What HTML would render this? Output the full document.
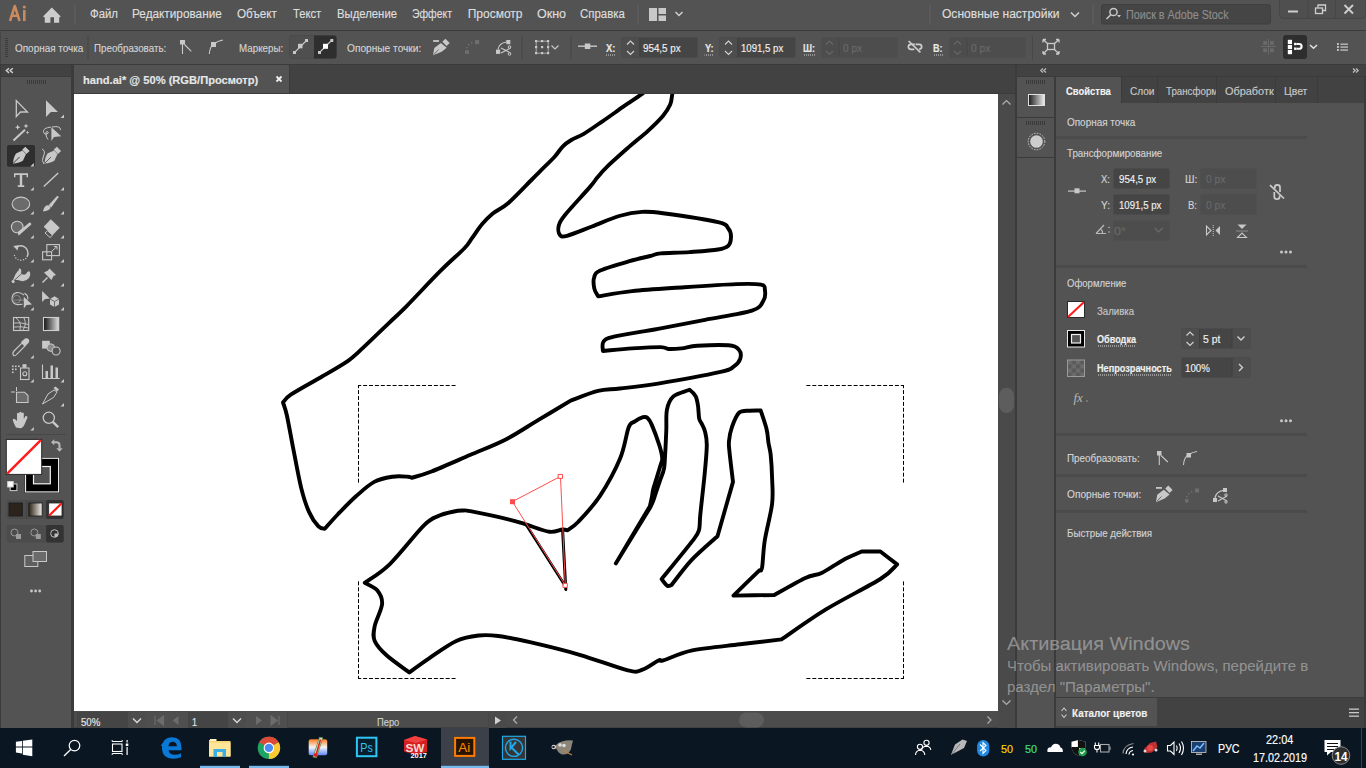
<!DOCTYPE html>
<html><head><meta charset="utf-8">
<style>
*{margin:0;padding:0;box-sizing:border-box}
html,body{width:1366px;height:768px;overflow:hidden;background:#535353;font-family:"Liberation Sans",sans-serif;color:#d9d9d9}
.a{position:absolute}
.t{position:absolute;white-space:nowrap;line-height:1;transform-origin:0 0;-webkit-text-stroke:0.15px currentColor}
svg{position:absolute;overflow:visible}
</style></head><body>
<!-- menubar -->
<div class="a" style="left:0;top:0;width:1366px;height:30px;background:#535353"></div>
<!-- control bar -->
<div class="a" style="left:0;top:30px;width:1366px;height:34px;background:#535353;border-top:1px solid #3b3b3b;border-left:1px solid #474747"></div>
<!-- left panel -->
<div class="a" style="left:0;top:64px;width:73px;height:664px;background:#3b3b3b"></div>
<div class="a" style="left:1px;top:65px;width:70px;height:11px;background:#424242"></div>
<div class="a" style="left:1px;top:77px;width:70px;height:651px;background:#535353"></div>
<!-- doc area -->
<div class="a" style="left:73px;top:64px;width:943px;height:664px;background:#3b3b3b"></div>
<div class="a" style="left:74px;top:65px;width:941px;height:28px;background:#424242"></div>
<div class="a" style="left:74px;top:65px;width:215px;height:28px;background:#535353"></div>
<div class="a" style="left:74px;top:94px;width:924px;height:617px;background:#fff"></div>
<div class="a" style="left:998px;top:94px;width:17px;height:617px;background:#4a4a4a"></div>
<div class="a" style="left:74px;top:711px;width:941px;height:17px;background:#4c4c4c;border-bottom:1px solid #42403d"></div>
<!-- right dock -->
<div class="a" style="left:1015px;top:64px;width:351px;height:664px;background:#3b3b3b"></div>
<div class="a" style="left:1017px;top:65px;width:349px;height:11px;background:#424242"></div>
<div class="a" style="left:1017px;top:77px;width:37px;height:651px;background:#535353"></div>
<div class="a" style="left:1056px;top:77px;width:308px;height:620px;background:#535353"></div>
<div class="a" style="left:1056px;top:77px;width:308px;height:26px;background:#424242"></div>
<div class="a" style="left:1056px;top:77px;width:65px;height:26px;background:#535353"></div>
<div class="a" style="left:1056px;top:698px;width:308px;height:30px;background:#424242"></div>
<div class="a" style="left:1056px;top:698px;width:101px;height:28px;background:#535353"></div>
<!-- taskbar -->
<div class="a" style="left:0;top:728px;width:1366px;height:40px;background:#0b1623"></div>

<svg style="left:0;top:0" width="1366" height="768">
<!-- menubar: Ai logo -->
<path d="M10,21 L14.8,6 L19.6,21 M12.2,15.8 H17.4" stroke="#c98a5e" stroke-width="2.5" fill="none" stroke-linejoin="round"/><rect x="23" y="10" width="2.6" height="11" fill="#c98a5e"/><circle cx="24.3" cy="7" r="1.6" fill="#c98a5e"/>
<!-- home icon -->
<path d="M43,16.5 L51.8,7.5 L60.8,16.5 L59.2,17.5 L59.2,22.8 L54,22.8 L54,17.3 L50.4,17.3 L50.4,22.8 L44.8,22.8 L44.8,17.5 Z" fill="#cdcdcd"/>
<rect x="74" y="5" width="2" height="20" fill="#5a5a5a"/>
<rect x="637" y="5" width="2" height="20" fill="#5a5a5a"/>
<!-- workspace icon -->
<rect x="649" y="8" width="8" height="13" fill="#c8c8c8"/>
<rect x="658.5" y="8" width="7.5" height="6" fill="#c8c8c8"/>
<rect x="658.5" y="15.5" width="7.5" height="5.5" fill="#c8c8c8"/>
<path d="M675.5,12 L679,15.5 L682.5,12" stroke="#d0d0d0" stroke-width="1.5" fill="none"/>
<rect x="929" y="5" width="2" height="20" fill="#5a5a5a"/>
<path d="M1071,12.5 L1075,16.5 L1079,12.5" stroke="#d0d0d0" stroke-width="1.5" fill="none"/>
<rect x="1092" y="5" width="2" height="20" fill="#5a5a5a"/>
<!-- search box -->
<rect x="1101.5" y="4.5" width="169" height="19.5" rx="2" fill="#454545" stroke="#3f3f3f"/>
<circle cx="1113.5" cy="12" r="3.6" stroke="#c8c8c8" stroke-width="1.5" fill="none"/>
<path d="M1111,14.5 L1106.5,19" stroke="#c8c8c8" stroke-width="1.6"/>
<path d="M1117,15 L1121,15 L1119,17.5 Z" fill="#c8c8c8"/>
<!-- window controls -->
<path d="M1279.5,0 V14.5 Q1279.5,18.5 1283.5,18.5 H1362 Q1366,18.5 1366,14.5 V0" fill="#4f4f4f" stroke="#464646"/>
<rect x="1307.5" y="0" width="1" height="18" fill="#464646"/>
<rect x="1335" y="0" width="1" height="18" fill="#464646"/>
<rect x="1288" y="10.5" width="10" height="2" fill="#cfcfcf"/>
<rect x="1315.5" y="8" width="7" height="5.5" fill="none" stroke="#cfcfcf" stroke-width="1.3"/>
<path d="M1318,7.5 V5 H1325.5 V10.5 H1323" fill="none" stroke="#cfcfcf" stroke-width="1.3"/>
<path d="M1344.5,5 L1353,13.5 M1353,5 L1344.5,13.5" stroke="#cfcfcf" stroke-width="1.8"/>

<!-- control bar -->
<g fill="#3a3a3a">
<rect x="5" y="38" width="3" height="1"/><rect x="5" y="40" width="3" height="1"/><rect x="5" y="42" width="3" height="1"/><rect x="5" y="44" width="3" height="1"/><rect x="5" y="46" width="3" height="1"/><rect x="5" y="48" width="3" height="1"/><rect x="5" y="50" width="3" height="1"/><rect x="5" y="52" width="3" height="1"/><rect x="5" y="54" width="3" height="1"/><rect x="5" y="56" width="3" height="1"/>
</g>
<rect x="87.5" y="35" width="1" height="24" fill="#474747"/>
<!-- convert icons -->
<g fill="#c8c8c8" stroke="#c8c8c8">
<rect x="180" y="40" width="5" height="4.5" stroke="none"/>
<path d="M182.5,44 V54" stroke-width="1.1" fill="none"/>
<path d="M184.5,44.5 L191.3,51.4" stroke-width="1.1" fill="none"/>
<rect x="211" y="42" width="5" height="5" stroke="none"/>
<path d="M209.3,54 Q210,46 213.5,44.5 Q217,41 223,40" stroke-width="1.1" fill="none"/>
</g>
<!-- markers group -->
<rect x="289.5" y="35.5" width="47" height="23" rx="2.5" fill="#4f4f4f" stroke="#4a4a4a"/>
<path d="M314,35.5 H334 Q336.5,35.5 336.5,38 V56 Q336.5,58.5 334,58.5 H314 Z" fill="#2e2e2e"/>
<g stroke-width="1.1">
<path d="M294.5,52.5 L306.5,40.5" stroke="#c8c8c8"/>
<rect x="293" y="51" width="3" height="3" fill="#c8c8c8"/>
<rect x="298" y="43.8" width="4.5" height="4.5" fill="#c8c8c8"/>
<rect x="305" y="39" width="3" height="3" fill="#c8c8c8"/>
<path d="M319.5,52.5 L331.5,40.5" stroke="#c8c8c8"/>
<rect x="318" y="51" width="3" height="3" fill="#c8c8c8"/>
<rect x="323" y="43.8" width="5" height="5" fill="#ffffff"/>
<rect x="330.3" y="39" width="3" height="3" fill="#c8c8c8"/>
</g>
<!-- anchor point icons -->
<rect x="433.1" y="40.1" width="5.9" height="1.8" fill="#c8c8c8"/><path d="M433.0,55.3 L434.3,47.9 L440.9,42.9 L446.7,47.7 L441.7,51.7 Z" fill="#c8c8c8"/><path d="M442.3,41.7 L445.4,38.7 L449.7,43.0 L446.6,46.1 Z" fill="#c8c8c8"/><path d="M433.7,54.6 L438.6,49.6" stroke="#535353" stroke-width="0.8"/>
<g fill="#6e6e6e">
<rect x="465" y="50.3" width="4" height="3.5"/><rect x="475" y="40" width="4.2" height="4.2"/>
<rect x="466" y="47" width="1.5" height="1.5"/><rect x="468" y="44" width="1.5" height="1.5"/><rect x="471" y="42" width="1.5" height="1.5"/>
</g>
<rect x="496" y="49.6" width="4.2" height="4.3" fill="#c8c8c8"/>
<rect x="506.3" y="40" width="4" height="4.2" fill="#c8c8c8"/>
<path d="M498,49.5 Q499,43 506.5,42" stroke="#c8c8c8" stroke-width="1.2" fill="none"/>
<path d="M501,48 L510.5,53 M501,53 L510.5,48" stroke="#c8c8c8" stroke-width="1.1"/>
<circle cx="509.5" cy="47" r="1.3" fill="none" stroke="#c8c8c8"/>
<circle cx="509.5" cy="54" r="1.3" fill="none" stroke="#c8c8c8"/>
<rect x="521.5" y="35.5" width="1" height="24" fill="#474747"/>
<g fill="#c8c8c8">
<rect x="535.7" y="40.7" width="1" height="13" opacity="0.7"/><rect x="547.7" y="40.7" width="1" height="13" opacity="0.7"/>
<rect x="535.7" y="40.7" width="13" height="1" opacity="0.7"/><rect x="535.7" y="52.7" width="13" height="1" opacity="0.7"/>
<rect x="535" y="40" width="2.2" height="2.2"/><rect x="541" y="40" width="2.2" height="2.2"/><rect x="547" y="40" width="2.2" height="2.2"/>
<rect x="535" y="46" width="2.2" height="2.2"/><rect x="541" y="46" width="2.2" height="2.2"/><rect x="547" y="46" width="2.2" height="2.2"/>
<rect x="535" y="52" width="2.2" height="2.2"/><rect x="541" y="52" width="2.2" height="2.2"/><rect x="547" y="52" width="2.2" height="2.2"/>
</g>
<path d="M551.5,45.5 L555,49 L558.5,45.5" stroke="#c8c8c8" stroke-width="1.2" fill="none"/>
<rect x="570.5" y="35.5" width="1" height="24" fill="#474747"/>
<rect x="578" y="45.5" width="19" height="1.4" fill="#c8c8c8"/>
<rect x="584.8" y="43.5" width="5.5" height="5.5" fill="#c8c8c8"/>
<!-- X input -->
<g>
<rect x="621.5" y="37.5" width="76" height="20" rx="2" fill="#454545" stroke="#4b4b4b"/>
<rect x="622" y="38" width="17.5" height="19" fill="#4d4d4d"/>
<rect x="639.5" y="38" width="1" height="19" fill="#3f3f3f"/>
<path d="M627,44.5 L630.5,41 L634,44.5 M627,51 L630.5,54.5 L634,51" stroke="#d0d0d0" stroke-width="1.2" fill="none"/>
</g>
<g>
<rect x="719.5" y="37.5" width="76" height="20" rx="2" fill="#454545" stroke="#4b4b4b"/>
<rect x="720" y="38" width="17.5" height="19" fill="#4d4d4d"/>
<rect x="737.5" y="38" width="1" height="19" fill="#3f3f3f"/>
<path d="M725,44.5 L728.5,41 L732,44.5 M725,51 L728.5,54.5 L732,51" stroke="#d0d0d0" stroke-width="1.2" fill="none"/>
</g>
<g>
<rect x="821.5" y="37.5" width="76" height="20" rx="2" fill="#4d4d4d" stroke="#4f4f4f"/>
<rect x="838.5" y="38" width="1" height="19" fill="#474747"/>
<path d="M826,44.5 L829.5,41 L833,44.5 M826,51 L829.5,54.5 L833,51" stroke="#666" stroke-width="1.2" fill="none"/>
</g>
<g>
<rect x="949.5" y="37.5" width="76" height="20" rx="2" fill="#4d4d4d" stroke="#4f4f4f"/>
<rect x="966.5" y="38" width="1" height="19" fill="#474747"/>
<path d="M954,44.5 L957.5,41 L961,44.5 M954,51 L957.5,54.5 L961,51" stroke="#666" stroke-width="1.2" fill="none"/>
</g>
<!-- dotted underlines for labels -->
<g fill="#c0c0c0">
<rect x="605.5" y="54.5" width="10" height="1" fill="url(#dots)"/>
</g>
<defs><pattern id="dots" width="2" height="1" patternUnits="userSpaceOnUse"><rect width="1" height="1" fill="#d0d0d0"/></pattern></defs>
<rect x="704.5" y="54.5" width="9" height="1" fill="url(#dots)"/>
<rect x="803" y="54.5" width="12" height="1" fill="url(#dots)"/>
<rect x="933.5" y="54.5" width="10" height="1" fill="url(#dots)"/>
<!-- link icon -->
<g stroke="#cdcdcd" stroke-width="1.7" fill="none">
<path d="M914.8,44.3 H911 Q908.4,44.3 908.4,46.8 Q908.4,49.3 911,49.3 H914.3"/>
<path d="M915.5,44.3 H919.2 Q921.7,44.3 921.7,46.8 Q921.7,49.1 919.2,49.1"/>
<path d="M908.6,41 L920.4,52.3"/>
</g>
<rect x="1032" y="35.5" width="1" height="24" fill="#474747"/>
<!-- transform icon -->
<g stroke="#c8c8c8" stroke-width="1.3" fill="none">
<rect x="1047.5" y="43.5" width="7" height="6"/>
<path d="M1043,39.5 L1047.5,43.5 M1043,39.5 V42.5 M1043,39.5 H1046"/>
<path d="M1059,39.5 L1054.5,43.5 M1059,39.5 V42.5 M1059,39.5 H1056"/>
<path d="M1043,54 L1047.5,49.5 M1043,54 V51 M1043,54 H1046"/>
<path d="M1059,54 L1054.5,49.5 M1059,54 V51 M1059,54 H1056"/>
</g>
<!-- right controls -->
<g fill="#6a6a6a">
<rect x="1263.2" y="41" width="3.8" height="3.9"/><rect x="1270" y="41" width="3.8" height="3.9"/>
<rect x="1263.2" y="48.3" width="3.8" height="3.8"/><rect x="1270" y="48.3" width="3.8" height="3.8"/>
<rect x="1268" y="39" width="1" height="15"/><rect x="1261" y="46" width="15" height="1"/>
</g>
<rect x="1283" y="35" width="24" height="24" rx="3" fill="#2e2e2e"/>
<g fill="#ffffff">
<rect x="1287.8" y="39.8" width="4.2" height="4.2"/><rect x="1287.8" y="44.9" width="4.2" height="4.2"/><rect x="1287.8" y="50" width="4.2" height="4.2"/>
<rect x="1294.1" y="42.8" width="2.3" height="2.4"/><rect x="1294.1" y="47.5" width="2.3" height="2.4"/>
</g>
<path d="M1296.4,44 H1299 Q1301.6,44 1301.6,46.4 Q1301.6,48.8 1299,48.8 H1296.4" stroke="#ffffff" stroke-width="2.1" fill="none"/>
<path d="M1310,45 L1313.5,48.3 L1317,45" stroke="#e0e0e0" stroke-width="1.5" fill="none"/>
<g fill="#d8d8d8">
<rect x="1337" y="43.2" width="1.8" height="1.7"/><rect x="1337" y="46.1" width="1.8" height="1.7"/><rect x="1337" y="49.1" width="1.8" height="1.7"/>
<rect x="1340.4" y="43.6" width="7.6" height="1.1"/><rect x="1340.4" y="46.5" width="7.6" height="1.1"/><rect x="1340.4" y="49.5" width="7.6" height="1.1"/>
</g>
</svg>

<svg style="left:0;top:0" width="1366" height="768">
<defs>
<linearGradient id="gr1" x1="0" x2="1" y1="0" y2="0"><stop offset="0" stop-color="#111"/><stop offset="1" stop-color="#e0e0e0"/></linearGradient>
<linearGradient id="gr2" x1="0" x2="1" y1="0" y2="0"><stop offset="0" stop-color="#2b2218"/><stop offset="1" stop-color="#f4f0ea"/></linearGradient>
</defs>
<!-- "<<" left -->
<path d="M9,68.3 L6.3,70.6 L9,72.9 M12.8,68.3 L10.1,70.6 L12.8,72.9" stroke="#d0d0d0" stroke-width="1.4" fill="none"/>
<!-- grip -->
<g fill="#3a3a3a"><rect x="27" y="80" width="1" height="4"/><rect x="29" y="80" width="1" height="4"/><rect x="31" y="80" width="1" height="4"/><rect x="33" y="80" width="1" height="4"/><rect x="35" y="80" width="1" height="4"/><rect x="37" y="80" width="1" height="4"/><rect x="39" y="80" width="1" height="4"/><rect x="41" y="80" width="1" height="4"/><rect x="43" y="80" width="1" height="4"/><rect x="45" y="80" width="1" height="4"/></g>
<g fill="#c8c8c8" stroke="#c8c8c8">
<!-- row1 -->
<path d="M16.3,100.5 V116.5 L20.5,112 H27.5 Z" fill="none" stroke-width="1.3" stroke-linejoin="miter"/>
<path d="M46,100.2 V117 L50.9,112 H58 Z" stroke="none"/>
<!-- row2 magic wand -->
<path d="M13.5,140.5 L25,129.8" stroke-width="2" fill="none"/>
<path d="M17.7,124.5 L18.5,126.5 L20.5,127.3 L18.5,128.1 L17.7,130 L16.9,128.1 L15,127.3 L16.9,126.5 Z" stroke="none"/>
<path d="M26,123.5 L26.7,125.3 L28.5,126 L26.7,126.7 L26,128.5 L25.3,126.7 L23.5,126 L25.3,125.3 Z" stroke="none"/>
<path d="M27.5,130.5 L28,131.9 L29.4,132.5 L28,133.1 L27.5,134.5 L27,133.1 L25.6,132.5 L27,131.9 Z" stroke="none"/>
<!-- lasso -->
<path d="M51,127 Q43,128 43.5,131.5 Q44,135 47,134 Q49.5,133 47.5,131.5 Q45.5,131 46,134.5 Q46.5,138 48,139.5 M52,127 Q61,125.5 60.5,130" fill="none" stroke-width="1"/>
<path d="M51.4,127.3 V140.9 L54,137 L61.2,136.2 Z" stroke="none"/>
</g>
<!-- row3 pen selected bg -->
<rect x="7" y="145" width="28" height="21.7" rx="2" fill="#2e2e2e"/>
<g fill="#c8c8c8" stroke="#c8c8c8">
<path d="M13,163.5 Q13.5,157 16,153.5 L22.5,150.5 L26,154 L23,160.5 Q19.5,163 13,163.5 Z" stroke="none"/>
<path d="M22.2,149.8 L25.3,146.7 L29.6,151 L26.5,154.1 Z" stroke="none"/>
<path d="M13.5,163 L19.5,157" stroke="#2e2e2e" stroke-width="0.9"/>
<path d="M44.5,163.5 Q45,157 47.5,153.5 L54,150.5 L57.5,154 L54.5,160.5 Q51,163 44.5,163.5 Z" stroke="none"/>
<path d="M53.7,149.8 L56.8,146.7 L61.1,151 L58,154.1 Z" stroke="none"/>
<path d="M45,163 L51,157" stroke="#535353" stroke-width="0.9"/>
<path d="M42,149 Q46,151 43.5,156 Q41,161 44,164" fill="none" stroke-width="1"/>
<!-- row4 T and line -->
<path d="M14,173.3 H28 V177.3 H26.6 V175.1 H22.2 V185.2 H24.2 V187 H17.8 V185.2 H19.8 V175.1 H15.4 V177.3 H14 Z" stroke="none"/>
<path d="M43.8,186.5 L58.2,173" stroke-width="1.4" fill="none"/>
<!-- row5 ellipse, brush -->
<ellipse cx="20.9" cy="204" rx="8.8" ry="6.9" fill="#6b6b6b" stroke-width="1.1"/>
<path d="M48.6,205.2 L56.8,196.3 Q58.6,195.3 58.5,197.2 L51.2,207.6 Z" stroke="none"/>
<path d="M43,211.5 Q44,206.5 46.5,205.5 Q49.5,204.8 50.5,207.5 Q50,210.5 43,211.5 Z" stroke="none"/>
<!-- row6 shaper, eraser -->
<circle cx="17.2" cy="227" r="5.8" fill="#6b6b6b" stroke-width="1.1"/>
<path d="M18.3,235.5 L17.8,232 L29.5,222.5 Q31.5,222.5 31.3,224.5 L20,234.5 Z" stroke="none"/>
<path d="M50.8,219.3 L59.7,227.8 L52.5,235.2 L43.7,226.7 Z" stroke="none"/>
<path d="M47.5,230.7 L52.5,235.2 L50,237.5 L45,233 Z" fill="#535353" stroke-width="1"/>
<!-- row7 rotate, scale -->
<path d="M15.5,247.5 Q21,244 25.5,247.5 Q29.5,252 27,257" fill="none" stroke-width="1.4"/>
<path d="M13.2,246 L18.5,245.2 L17.5,250.5 Z" stroke="none"/>
<g stroke="none"><circle cx="14.5" cy="255.5" r="0.7"/><circle cx="15.8" cy="258" r="0.7"/><circle cx="18" cy="259.6" r="0.7"/><circle cx="20.8" cy="260.3" r="0.7"/><circle cx="23.6" cy="259.8" r="0.7"/><circle cx="25.8" cy="258.5" r="0.7"/></g>
<rect x="42.6" y="251.8" width="9" height="8" fill="none" stroke-width="1.1"/>
<rect x="46.8" y="244.6" width="12.6" height="11" fill="none" stroke-width="1.1"/>
<path d="M52,251 L57,246.5 M54,246.5 H57 V249.5" fill="none" stroke-width="1"/>
<!-- row8 puppet, pin -->
<path d="M13,280 Q16,272 19,270 Q18,268 20,268.5 Q22,270 21,273 Q23,276 26,274 Q28,270 30,272 Q31,275 29,278 Q25,283 18,280 Z" stroke="none"/>
<circle cx="13.2" cy="281.5" r="1.2"/>
<path d="M14,280.5 L23,272.5" stroke="#535353" stroke-width="0.9"/>
<path d="M49.5,268.5 L56,275 L53.5,276 L51.5,280 L44,272.5 L48,270.5 Z" stroke="none"/>
<path d="M42.5,282.5 L47.5,277.5" stroke-width="1.4"/>
<!-- row9 shape builder, perspective -->
<path d="M24,295 Q21,292.3 17,292.6 Q12,293.3 12,299 Q12.3,304 17.5,304.6 L22.5,304.3" fill="none" stroke-width="1.1"/><path d="M24.5,293.2 Q28.5,295.5 27.8,299.5" fill="none" stroke-width="1.1"/><circle cx="16.6" cy="299.2" r="3.8" fill="none" stroke="#8a8a8a" stroke-width="1"/><g stroke="none"><circle cx="15" cy="300" r="0.6"/><circle cx="17" cy="300" r="0.6"/><circle cx="19" cy="300" r="0.6"/><circle cx="21" cy="300" r="0.6"/><circle cx="23" cy="300" r="0.6"/></g>
<path d="M23.8,296.8 V308.4 L26.5,305 L32,304.5 Z" stroke="none"/>
<path d="M42.1,291 V302.1 L45,299 L49.8,298.5 Z" stroke="none"/>
<path d="M54.5,296.3 L59,299 V304.5 L54.5,307 L50,304.5 V299 Z" stroke="none"/>
<path d="M50,299 L54.5,301.5 L59,299 M54.5,301.5 V307" stroke="#535353" stroke-width="0.8" fill="none"/>
<!-- row10 mesh, gradient -->
<rect x="13.5" y="317.5" width="15.2" height="13" fill="none" stroke-width="1.1"/>
<path d="M16,318 Q22,322 20,330 M24,318 Q27,324 23,330 M14,323 Q20,322 28.5,324.5 M14,327 Q21,326 28.5,328" fill="none" stroke-width="0.9"/>
<rect x="43.5" y="317.5" width="15.2" height="13" fill="url(#gr1)" stroke="#d0d0d0" stroke-width="1.1"/>
<!-- row11 eyedropper, blend -->
<path d="M13.5,355.5 Q12,353 14,351 L22,343 L25,346 L17,354 Q15,356.5 13.5,355.5 Z" fill="none" stroke-width="1.1"/>
<path d="M21,342 L25,338.5 Q27,337.5 28.8,339.3 Q30,341 28.5,343 L25,346.5 Z" stroke="none"/>
<rect x="42.1" y="340.8" width="7.7" height="7.8" stroke="none"/>
<circle cx="50.8" cy="347.6" r="3.8" fill="#8a8a8a" stroke-width="1"/>
<circle cx="56.1" cy="351" r="4" fill="#535353" stroke-width="1.1"/>
<!-- row12 sprayer, graph -->
<g stroke="none"><rect x="12" y="365.5" width="1.6" height="1.6"/><rect x="15" y="365.5" width="1.6" height="1.6"/><rect x="18" y="365.5" width="1.6" height="1.6"/><rect x="12" y="368.5" width="1.6" height="1.6"/><rect x="15" y="368.5" width="1.6" height="1.6"/><rect x="12" y="371.5" width="1.6" height="1.6"/></g>
<rect x="20.5" y="368" width="8.5" height="11.5" fill="none" stroke-width="1.1"/>
<rect x="22.5" y="364.2" width="4" height="3.5" stroke="none"/>
<circle cx="24.8" cy="373.7" r="2" fill="none" stroke-width="1.1"/>
<path d="M42.5,364.5 V378.5 H59.8" fill="none" stroke-width="1.1"/>
<rect x="45.5" y="371" width="2.5" height="7.5" stroke="none"/><rect x="50.5" y="365.5" width="2.5" height="13" stroke="none"/><rect x="55.5" y="367.5" width="2.5" height="11" stroke="none"/>
<!-- row13 artboard, slice -->
<path d="M11,392 H15 M16.5,387 V391" stroke-width="1" fill="none"/>
<path d="M16.5,392.2 H24.5 L28,395.5 V402.5 H16.5 Z" fill="#6b6b6b" stroke-width="1.1"/>
<path d="M42.5,404 L48,394 L54,390 L57,392 L53.5,397.5 Z" fill="none" stroke-width="1"/>
<path d="M53.5,388 L55.5,386.5 L59,389.5 L57,391.5 Z" stroke="none"/>
<!-- row14 hand, zoom -->
<path d="M16,427.5 Q13,422 12.8,419.5 Q13.5,418 15.5,419.5 L17,421 V413.5 Q18,412 19.2,413.5 V418 V412.5 Q20.2,411 21.5,412.5 V418 V413 Q22.7,411.8 23.8,413.2 V419 L25.5,416 Q27.5,415.5 27.5,417.5 L24.5,424.5 Q23,428 20,428.2 Z" stroke="none"/>
<circle cx="48.8" cy="417.8" r="5.6" fill="none" stroke-width="1.3"/>
<path d="M52.8,421.8 L58.2,427.2" stroke-width="2.4"/>
<!-- sub-tool triangles -->
<g stroke="none">
<path d="M64,114.5 V118 H60.5 Z"/>
<path d="M33.8,163 V166.5 H30.3 Z" fill="#d0d0d0"/>
<path d="M33.8,187 V190.5 H30.3 Z"/><path d="M64,187 V190.5 H60.5 Z"/>
<path d="M33.8,211 V214.5 H30.3 Z"/><path d="M64,211 V214.5 H60.5 Z"/>
<path d="M33.8,235 V238.5 H30.3 Z"/><path d="M64,235 V238.5 H60.5 Z"/>
<path d="M33.8,259 V262.5 H30.3 Z"/><path d="M64,259 V262.5 H60.5 Z"/>
<path d="M33.8,283 V286.5 H30.3 Z"/><path d="M64,283 V286.5 H60.5 Z"/>
<path d="M33.8,307 V310.5 H30.3 Z"/><path d="M64,307 V310.5 H60.5 Z"/>
<path d="M33.8,355 V358.5 H30.3 Z"/>
<path d="M33.8,379 V382.5 H30.3 Z"/><path d="M64,379 V382.5 H60.5 Z"/>
<path d="M64,403 V406.5 H60.5 Z"/>
<path d="M33.8,427 V430.5 H30.3 Z"/>
</g>
</g>
<rect x="6" y="434" width="60" height="1" fill="#474747"/>
<path d="M276.5,76.5 L281.5,81.5 M281.5,76.5 L276.5,81.5" stroke="#f0f0f0" stroke-width="1.8"/><rect x="289" y="65" width="1" height="28" fill="#3b3b3b"/>
<!-- fill / stroke -->
<rect x="24.6" y="457.3" width="35" height="35.6" fill="#2a2a2a"/>
<rect x="25.6" y="458.3" width="33" height="33.6" fill="#000" stroke="#fff" stroke-width="1"/>
<rect x="33.5" y="466.5" width="16.8" height="17.3" fill="#535353" stroke="#f4f4f4" stroke-width="1.2"/>
<rect x="6.3" y="439.4" width="35.4" height="35" fill="#fff" stroke="#2a2a2a" stroke-width="1"/>
<path d="M7.2,473.6 L40.8,440.2" stroke="#ff1a1a" stroke-width="2.4"/>
<path d="M53,442.3 H56.5 Q59.5,442.3 59.5,445.3 V448.5" stroke="#b8b8b8" stroke-width="2" fill="none"/>
<path d="M51,442.3 L54.3,439.3 V445.3 Z M56.3,448.3 H62.7 L59.5,451.8 Z" fill="#b8b8b8"/>
<rect x="10.2" y="484" width="6.7" height="6.6" fill="#000" stroke="#cfcfcf" stroke-width="1"/>
<rect x="7.7" y="481.5" width="5.5" height="5.5" fill="#fff" stroke="#cfcfcf" stroke-width="1"/>
<!-- color modes -->
<rect x="6.5" y="500" width="57" height="19" rx="2" fill="#4c4c4c"/>
<rect x="46" y="500" width="17.7" height="19" rx="2" fill="#333"/>
<rect x="26.3" y="500" width="0.8" height="19" fill="#444"/>
<rect x="9" y="503" width="13.3" height="13" fill="#2c241c" stroke="#1a1a1a" stroke-width="0.8"/>
<rect x="28.8" y="503" width="13.3" height="13" fill="url(#gr2)" stroke="#1a1a1a" stroke-width="0.8"/>
<rect x="48.7" y="503" width="13.3" height="13" fill="#fff" stroke="#222" stroke-width="0.8"/>
<path d="M49,515.7 L61.7,503.3" stroke="#ff1a1a" stroke-width="2.2"/>
<!-- draw modes -->
<rect x="6.5" y="525" width="57" height="17.5" rx="2" fill="#4c4c4c"/>
<rect x="46" y="525" width="17.7" height="17.5" rx="2" fill="#333"/>
<g fill="none" stroke="#9a9a9a" stroke-width="1">
<circle cx="14.5" cy="532.5" r="3.5"/><rect x="16" y="534" width="5" height="5" fill="#9a9a9a" stroke="none"/>
<circle cx="34.3" cy="532.5" r="3.5"/><rect x="35.8" y="534" width="5" height="5" fill="#9a9a9a" stroke="none"/>
<circle cx="54.5" cy="533.5" r="3.8" stroke="#c0c0c0"/><path d="M54.5,533.5 H58.3 A3.8,3.8 0 0 1 54.5,537.3 Z" fill="#c0c0c0" stroke="none"/>
</g>
<!-- screen mode -->
<rect x="24.8" y="555.5" width="13" height="11" fill="#5f5f5f" stroke="#c8c8c8" stroke-width="1"/>
<rect x="33" y="551.5" width="13.5" height="10" fill="#6b6b6b" stroke="#c8c8c8" stroke-width="1"/>
<circle cx="31.5" cy="591" r="1.4" fill="#c8c8c8"/><circle cx="35.6" cy="591" r="1.4" fill="#c8c8c8"/><circle cx="39.7" cy="591" r="1.4" fill="#c8c8c8"/>
</svg>

<svg class="a" style="left:0;top:0" width="1366" height="768" viewBox="0 0 1366 768">
<defs><clipPath id="cv"><rect x="74" y="94" width="924" height="617"/></clipPath></defs>
<g clip-path="url(#cv)" fill="none" stroke="#000" stroke-linejoin="round" stroke-linecap="round">
<path d="M674.5,86.0 C674.1,87.3 673.0,90.9 672.3,94.0 C671.6,97.1 671.8,100.9 670.2,104.6 C668.6,108.3 666.5,111.7 662.9,116.0 C659.2,120.3 654.2,125.2 648.3,130.6 C642.4,136.0 634.4,142.2 627.5,148.3 C620.6,154.4 611.7,162.2 606.7,167.1 C601.7,172.0 600.1,174.2 597.3,177.5 C594.5,180.8 595.4,180.7 590.0,186.9 C584.6,193.2 570.2,208.6 565.0,215.0 C559.8,221.4 559.7,222.1 558.8,225.4 C557.9,228.7 558.4,233.1 559.8,234.8 C561.2,236.5 561.6,237.2 567.0,235.8 C572.4,234.4 583.3,229.8 592.0,226.5 C600.7,223.2 610.9,218.4 619.2,216.0 C627.5,213.6 634.7,212.3 642.0,211.9 C649.3,211.5 650.3,211.6 663.0,213.3 C675.7,215.0 707.1,219.6 718.0,222.1 C728.9,224.6 726.2,226.2 728.4,228.6 C730.6,231.0 731.0,233.7 731.0,236.5 C731.0,239.3 730.6,243.4 728.4,245.6 C726.2,247.8 724.5,248.4 718.0,249.5 C711.5,250.6 698.9,251.4 689.4,252.1 C679.9,252.8 667.2,252.8 660.7,253.4 C654.2,254.1 655.5,254.7 650.3,256.0 C645.1,257.3 637.8,258.8 629.5,261.2 C621.2,263.6 606.7,267.7 600.8,270.3 C594.9,272.9 595.4,273.8 594.3,276.8 C593.2,279.8 593.6,285.2 594.3,288.5 C594.9,291.8 597.6,295.1 598.2,296.4 C603.9,295.5 617.8,292.6 632.1,291.1 C646.4,289.6 666.9,288.4 684.2,287.2 C701.6,286.0 723.4,284.5 736.2,284.1 C749.0,283.7 756.2,283.7 761.0,284.6 C765.8,285.6 764.5,287.2 764.9,289.8 C765.3,292.4 765.8,296.8 763.6,300.3 C761.4,303.8 761.7,307.4 751.9,310.7 C742.1,313.9 720.6,316.8 705.0,319.8 C689.4,322.8 673.3,326.1 658.1,328.9 C642.9,331.7 623.0,334.5 613.9,336.7 C604.8,338.9 605.2,339.5 603.4,341.9 C601.6,344.3 603.0,349.5 602.9,351.0 C607.8,350.6 622.5,349.0 632.1,348.4 C641.7,347.8 654.6,347.0 660.7,347.1 C666.8,347.2 665.0,348.8 668.5,349.0 C672.0,349.2 676.8,348.9 681.6,348.4 C686.4,347.9 689.4,346.3 697.2,345.8 C705.0,345.3 721.5,344.7 728.4,345.3 C735.3,345.9 736.9,347.4 738.9,349.7 C740.9,352.0 741.1,356.1 740.2,358.9 C739.3,361.7 736.9,364.5 733.6,366.7 C730.3,368.9 733.2,369.1 720.6,371.9 C708.0,374.7 674.9,380.8 658.1,383.6 C641.3,386.4 630.0,387.3 620.0,388.5 C610.0,389.7 606.2,388.9 598.0,390.9 C589.8,392.9 575.2,399.0 570.7,400.6 C565.3,403.8 549.2,413.5 538.5,419.9 C527.8,426.3 517.7,433.3 506.3,439.2 C494.9,445.1 482.5,449.6 470.0,455.0 C457.5,460.4 441.2,467.7 431.5,471.5 C421.8,475.3 414.9,476.8 411.6,477.8 C411.0,477.6 411.2,476.9 408.0,476.7 C404.8,476.5 398.0,475.8 392.4,476.7 C386.8,477.6 380.3,478.6 374.2,481.9 C368.1,485.2 362.1,490.9 356.0,496.3 C349.9,501.7 342.9,509.1 337.7,514.5 C332.5,519.9 326.9,526.4 324.7,528.8 C323.6,528.4 320.8,529.0 318.2,526.2 C315.6,523.4 311.8,518.2 309.0,511.9 C306.2,505.6 303.9,498.8 301.3,488.4 C298.7,478.0 295.8,461.5 293.4,449.4 C291.0,437.2 288.6,423.3 286.9,415.5 C285.2,407.7 283.6,404.7 283.0,402.5 C284.3,401.2 284.3,399.0 290.8,394.7 C297.3,390.4 312.6,382.1 322.1,376.5 C331.7,370.9 341.8,365.1 348.1,360.8 C354.4,356.5 353.2,356.9 360.0,350.6 C366.8,344.4 380.8,330.8 388.6,323.3 C396.4,315.8 398.2,314.6 406.9,305.8 C415.6,297.0 431.1,280.2 440.7,270.7 C450.2,261.1 459.0,253.9 464.2,248.5 C469.4,243.1 469.0,242.2 472.0,238.1 C475.0,234.0 478.9,227.9 482.4,223.8 C485.9,219.7 488.5,216.9 492.8,213.4 C497.1,209.9 501.9,208.7 508.4,203.0 C514.9,197.3 526.6,184.8 531.9,179.5 C537.2,174.2 536.2,175.1 540.0,171.3 C543.8,167.5 550.8,160.9 554.6,156.7 C558.4,152.5 560.1,149.1 562.9,146.3 C565.7,143.5 567.8,142.1 571.3,140.0 C574.8,137.9 578.6,136.9 583.8,133.8 C589.0,130.7 595.9,125.8 602.5,121.3 C609.1,116.8 616.7,111.3 623.3,106.7 C629.9,102.1 637.3,97.2 642.1,93.8 C646.9,90.3 650.4,87.3 652.0,86.0" stroke-width="3.9"/>
<path d="M615.8,563.4 C621.6,554.0 644.7,516.4 650.5,507.0 C651.0,505.9 652.4,503.0 653.4,500.3 C654.4,497.6 655.2,494.5 656.4,491.0 C657.6,487.5 659.2,482.9 660.5,479.2 C661.8,475.5 663.2,473.0 664.0,468.7 C664.8,464.4 664.8,459.8 665.2,453.4 C665.6,446.9 666.0,437.4 666.3,430.0 C666.6,422.6 665.8,414.9 667.0,409.3 C668.2,403.7 670.0,399.5 673.4,396.4 C676.8,393.3 684.7,391.5 687.5,390.5 C690.3,389.5 689.0,389.5 690.4,390.5 C691.8,391.5 694.4,393.8 695.7,396.4 C697.0,398.9 697.4,402.1 698.0,405.8 C698.6,409.5 698.6,415.8 699.2,418.7 C699.8,421.6 700.5,421.2 701.5,423.3 C702.5,425.4 704.1,427.8 705.0,431.5 C705.9,435.2 706.9,438.4 706.8,445.6 C706.7,452.8 705.7,463.1 704.6,474.6 C703.5,486.1 701.2,505.4 700.3,514.7 C699.3,524.0 700.3,525.9 698.9,530.4 C697.5,534.9 697.9,533.8 691.7,541.9 C685.5,550.0 666.6,572.9 661.6,579.1 C662.5,580.2 665.6,584.7 667.3,585.7 C669.0,586.7 670.9,585.0 671.6,584.9 C675.0,580.7 684.1,568.0 691.7,559.9 C699.4,551.8 713.2,540.2 717.5,536.2 C720.1,527.2 730.4,490.9 733.0,481.9 C732.4,476.9 730.2,458.8 729.5,452.0 C728.8,445.2 728.6,445.2 729.0,441.0 C729.4,436.8 730.3,431.6 732.0,426.9 C733.7,422.2 736.1,415.5 739.0,412.8 C741.9,410.1 746.0,411.1 749.6,410.7 C753.2,410.3 758.9,410.5 760.7,410.5 C761.7,413.6 765.3,423.8 766.6,429.2 C767.9,434.6 767.8,438.7 768.5,443.0 C769.2,447.3 770.1,449.1 770.7,455.0 C771.3,460.9 771.9,470.1 772.1,478.2 C772.3,486.3 773.3,493.4 772.1,503.7 C770.9,514.0 766.5,529.6 764.8,540.2 C763.1,550.8 763.0,562.5 762.1,567.5 C761.2,572.5 759.9,569.8 759.4,570.3 C755.1,574.5 737.8,591.4 733.5,595.6 C740.3,595.5 767.4,595.1 774.2,595.0 C779.4,592.1 797.4,581.6 805.4,577.9 C813.4,574.2 815.9,575.7 822.1,572.7 C828.4,569.8 836.3,563.7 842.9,560.2 C849.5,556.7 858.6,553.0 861.7,551.5 C864.8,551.5 877.3,551.5 880.4,551.5 C883.2,553.6 894.3,562.2 897.1,564.4 C894.3,566.8 892.2,571.5 880.4,579.0 C868.6,586.5 842.8,599.1 826.3,609.2 C809.8,619.3 789.0,634.4 781.5,639.4 C774.6,640.2 754.9,642.5 740.0,644.3 C725.1,646.1 705.1,647.7 692.3,650.4 C679.5,653.1 668.9,658.7 663.3,660.4 C657.7,662.1 662.0,658.8 658.5,660.4 C655.0,662.0 647.5,668.0 642.4,669.7 C637.3,671.4 638.4,672.9 627.9,670.4 C617.4,667.9 595.9,659.5 579.6,654.8 C563.3,650.1 543.5,645.3 530.0,642.2 C516.5,639.1 507.0,637.1 498.4,636.0 C489.8,634.9 485.6,634.7 478.6,635.5 C471.6,636.3 464.6,637.2 456.3,641.0 C448.1,644.8 436.9,653.1 429.1,658.3 C421.3,663.5 412.6,670.0 409.3,672.4 C405.6,669.6 392.9,661.0 387.1,655.8 C381.3,650.6 376.8,646.0 374.7,641.0 C372.6,636.0 373.5,632.3 374.7,626.1 C375.9,619.9 381.7,609.9 382.1,603.9 C382.5,597.9 380.1,593.8 377.2,590.3 C374.3,586.8 366.9,584.0 364.8,582.8 C368.9,579.7 379.7,573.9 389.6,564.3 C399.5,554.7 415.9,533.2 424.2,525.1 C432.5,517.0 434.5,517.9 439.5,515.6 C444.5,513.3 450.1,512.4 454.0,511.5 C457.9,510.6 460.3,510.6 463.0,510.5 C465.7,510.4 462.8,509.7 470.3,511.2 C477.9,512.7 499.0,517.1 508.3,519.3 C517.6,521.5 519.1,522.3 525.9,524.4 C532.7,526.5 543.2,530.9 549.3,531.7 C555.4,532.6 559.5,529.7 562.5,529.5 C565.5,529.3 566.8,530.2 567.6,530.3 C569.4,528.8 573.2,527.2 578.6,521.5 C584.0,515.8 593.1,506.3 600.0,495.9 C606.9,485.4 615.2,470.2 620.0,458.8 C624.8,447.4 626.3,433.5 628.7,427.3 C631.1,421.1 632.1,423.4 634.5,421.7 C636.9,420.0 640.9,417.8 643.0,417.2 C645.1,416.6 645.9,416.6 647.3,417.8 C648.7,419.0 649.6,419.8 651.6,424.4 C653.6,429.0 657.5,439.6 659.3,445.2 C661.1,450.8 662.0,454.8 662.2,458.1 C662.4,461.4 661.4,462.1 660.5,465.2 C659.6,468.3 658.2,473.0 657.0,476.9 C655.8,480.8 654.3,485.1 653.4,488.6 C652.5,492.1 652.3,495.1 651.7,498.0 C651.1,500.9 650.2,504.8 649.9,506.2 C644.2,515.7 621.5,553.9 615.8,563.4" stroke-width="3.9"/>
<path d="M526,524.5 L564.6,585" stroke-width="2.8"/>
<path d="M562.6,530 L565.8,589.5" stroke-width="3"/>
<g stroke-width="1" stroke-dasharray="4,1.9" stroke-dashoffset="0.8" stroke-linecap="butt">
<path d="M358,385.5 H457 M358.5,385 V484"/>
<path d="M904,385.5 H805 M903.5,385 V484"/>
<path d="M358,678.5 H457 M358.5,679 V581"/>
<path d="M904,678.5 H805 M903.5,679 V581"/>
</g>
<g stroke="#ff4d4d" stroke-width="1" stroke-linecap="butt">
<path d="M512.4,501.6 L560.5,476.4 L565.3,585.4 Z"/>
</g>
<rect x="510" y="499.2" width="5" height="5" fill="#ff4d4d" stroke="none"/>
<rect x="558.5" y="474.4" width="4" height="4" fill="#fff" stroke="#ff4d4d" stroke-width="1"/>
<rect x="563.3" y="583.4" width="4" height="4" fill="#fff" stroke="#ff4d4d" stroke-width="1"/>
</g></svg>
<svg style="left:0;top:0" width="1366" height="768">
<defs><pattern id="dots2" width="2" height="1" patternUnits="userSpaceOnUse"><rect width="1" height="1" fill="#d8d8d8"/></pattern>
<pattern id="chk" x="1067.5" y="360" width="8.5" height="8.5" patternUnits="userSpaceOnUse"><rect width="8.5" height="8.5" fill="#5a5a5a"/><rect width="4.25" height="4.25" fill="#6c6c6c"/><rect x="4.25" y="4.25" width="4.25" height="4.25" fill="#6c6c6c"/></pattern>
<linearGradient id="gr3" x1="0" x2="1"><stop offset="0" stop-color="#1a1a1a"/><stop offset="1" stop-color="#f0f0f0"/></linearGradient>
</defs>
<!-- dock <<  >> -->
<path d="M1043,68.5 L1040.8,70.5 L1043,72.5 M1046,68.5 L1043.8,70.5 L1046,72.5" stroke="#c0c0c0" stroke-width="1.2" fill="none"/>
<path d="M1353,68.5 L1355.2,70.5 L1353,72.5 M1356,68.5 L1358.2,70.5 L1356,72.5" stroke="#c0c0c0" stroke-width="1.2" fill="none"/>
<!-- scrollbar arrows -->
<path d="M1002.5,104.5 L1006.5,100.5 L1010.5,104.5" stroke="#b0b0b0" stroke-width="1.2" fill="none"/>
<path d="M1002.5,700.5 L1006.5,704.5 L1010.5,700.5" stroke="#b0b0b0" stroke-width="1.2" fill="none"/>
<rect x="999" y="387.8" width="15" height="25.2" rx="7.5" fill="#5d5d5d"/>
<!-- dock narrow panel icons -->
<g fill="#3a3a3a"><rect x="1026" y="80" width="1" height="4"/><rect x="1028" y="80" width="1" height="4"/><rect x="1030" y="80" width="1" height="4"/><rect x="1032" y="80" width="1" height="4"/><rect x="1034" y="80" width="1" height="4"/><rect x="1036" y="80" width="1" height="4"/><rect x="1038" y="80" width="1" height="4"/><rect x="1040" y="80" width="1" height="4"/><rect x="1042" y="80" width="1" height="4"/><rect x="1044" y="80" width="1" height="4"/></g>
<rect x="1028.5" y="94.5" width="16" height="11" fill="url(#gr3)" stroke="#e0e0e0" stroke-width="1"/>
<rect x="1017" y="117" width="37" height="1" fill="#3b3b3b"/>
<g fill="#3a3a3a"><rect x="1026" y="121" width="1" height="4"/><rect x="1028" y="121" width="1" height="4"/><rect x="1030" y="121" width="1" height="4"/><rect x="1032" y="121" width="1" height="4"/><rect x="1034" y="121" width="1" height="4"/><rect x="1036" y="121" width="1" height="4"/><rect x="1038" y="121" width="1" height="4"/><rect x="1040" y="121" width="1" height="4"/><rect x="1042" y="121" width="1" height="4"/><rect x="1044" y="121" width="1" height="4"/></g>
<circle cx="1036.5" cy="141.5" r="6.3" fill="#cdcdcd"/>
<circle cx="1036.5" cy="141.5" r="8.3" fill="none" stroke="#cdcdcd" stroke-width="1" stroke-dasharray="1.5,1.3"/>
<rect x="1017" y="157" width="37" height="1" fill="#3b3b3b"/>
<!-- tab separators -->
<rect x="1121" y="77" width="1" height="26" fill="#3b3b3b"/>
<rect x="1157" y="77" width="1" height="26" fill="#3b3b3b"/>
<rect x="1216" y="77" width="1" height="26" fill="#3b3b3b"/>
<rect x="1275" y="77" width="1" height="26" fill="#3b3b3b"/>
<rect x="1317" y="77" width="1" height="26" fill="#3b3b3b"/>
<!-- separators -->
<rect x="1056" y="136" width="251" height="3" fill="#4b4b4b"/>
<rect x="1056" y="265" width="251" height="3" fill="#4b4b4b"/>
<rect x="1056" y="433" width="251" height="3" fill="#4b4b4b"/>
<rect x="1056" y="474" width="251" height="3" fill="#4b4b4b"/>
<rect x="1056" y="510" width="251" height="3" fill="#4b4b4b"/>
<!-- transform -->
<rect x="1068" y="190.5" width="18" height="1.2" fill="#c8c8c8"/>
<rect x="1074.5" y="188.3" width="5" height="5" fill="#c8c8c8"/>
<rect x="1113.5" y="168.5" width="56" height="20" rx="2" fill="#454545" stroke="#4b4b4b"/>
<rect x="1113.5" y="194.5" width="56" height="20" rx="2" fill="#454545" stroke="#4b4b4b"/>
<rect x="1200.5" y="168.5" width="56" height="20" rx="1" fill="#4d4d4d"/>
<rect x="1200.5" y="194.5" width="56" height="20" rx="1" fill="#4d4d4d"/>
<rect x="1113.5" y="220.5" width="56" height="20" rx="1" fill="#4d4d4d"/>
<path d="M1154.5,228 L1158.5,232 L1162.5,228" stroke="#6a6a6a" stroke-width="1.2" fill="none"/>
<path d="M1096,233.5 L1104,225 M1096,233.5 H1106 M1101,229.5 Q1103,231 1102.5,233.5" stroke="#b8b8b8" stroke-width="1.2" fill="none"/>
<circle cx="1109" cy="227.5" r="0.8" fill="#b8b8b8"/><circle cx="1109" cy="232" r="0.8" fill="#b8b8b8"/>
<!-- link -->
<g stroke="#cdcdcd" stroke-width="1.7" fill="none">
<path d="M1274.8,188.5 V187.2 Q1274.8,184.8 1277.4,184.8 Q1280,184.8 1280,187.2 V192"/>
<path d="M1274.3,192 V196.8 Q1274.3,199.2 1277,199.2 Q1279.6,199.2 1279.6,196.8 V195.5"/>
<path d="M1270,185.2 L1284,198.5"/>
</g>
<!-- flip icons -->
<path d="M1206.5,226 V235 L1211,230.5 Z" fill="none" stroke="#c8c8c8" stroke-width="1.1"/>
<path d="M1220,226 V235 L1215.5,230.5 Z" fill="#c8c8c8"/>
<path d="M1213.2,225 V236" stroke="#c8c8c8" stroke-width="1" stroke-dasharray="1,1"/>
<path d="M1237.5,224.5 H1246.5 L1242,229 Z" fill="#c8c8c8"/>
<path d="M1237.5,237.5 H1246.5 L1242,233 Z" fill="none" stroke="#c8c8c8" stroke-width="1.1"/>
<path d="M1236.5,231 H1247.5" stroke="#c8c8c8" stroke-width="1" stroke-dasharray="1,1"/>
<g fill="#c8c8c8"><circle cx="1281.5" cy="252" r="1.5"/><circle cx="1286" cy="252" r="1.5"/><circle cx="1290.5" cy="252" r="1.5"/></g>
<!-- appearance -->
<rect x="1067.5" y="301.5" width="17" height="16" fill="#fff" stroke="#2a2a2a" stroke-width="1"/>
<path d="M1068,317 L1084,302" stroke="#ff1a1a" stroke-width="2"/>
<rect x="1067.5" y="330.5" width="17" height="16.5" fill="#000" stroke="#e8e8e8" stroke-width="1"/>
<rect x="1071.5" y="334.5" width="9" height="8.5" fill="#555" stroke="#f0f0f0" stroke-width="1.2"/>
<rect x="1067.5" y="360" width="17" height="16.5" fill="url(#chk)" stroke="#9a9a9a" stroke-width="1"/>
<rect x="1097" y="345.5" width="39" height="1" fill="url(#dots2)"/>
<rect x="1097" y="374.5" width="75" height="1" fill="url(#dots2)"/>
<!-- stroke weight field -->
<rect x="1181.5" y="328.5" width="69" height="20" rx="2" fill="#454545" stroke="#4b4b4b"/>
<rect x="1182" y="329" width="17" height="19" fill="#4d4d4d"/>
<rect x="1199" y="329" width="1" height="19" fill="#3f3f3f"/>
<rect x="1232" y="329" width="18" height="19" fill="#4d4d4d"/>
<rect x="1231.5" y="329" width="1" height="19" fill="#3f3f3f"/>
<path d="M1186.5,335.5 L1190,332 L1193.5,335.5 M1186.5,342 L1190,345.5 L1193.5,342" stroke="#d0d0d0" stroke-width="1.2" fill="none"/>
<path d="M1237.5,336.5 L1241,340 L1244.5,336.5" stroke="#d0d0d0" stroke-width="1.4" fill="none"/>
<!-- opacity field -->
<rect x="1181.5" y="357.5" width="69" height="20" rx="2" fill="#454545" stroke="#4b4b4b"/>
<rect x="1232" y="358" width="18" height="19" fill="#4d4d4d"/>
<rect x="1231.5" y="358" width="1" height="19" fill="#3f3f3f"/>
<path d="M1239,364 L1242.5,367.5 L1239,371" stroke="#d0d0d0" stroke-width="1.4" fill="none"/>
<!-- fx -->
<text x="1073.5" y="402" font-family="Liberation Serif" font-style="italic" font-size="13" fill="#b8b8b8">fx</text>
<circle cx="1087" cy="401" r="0.7" fill="#b8b8b8"/>
<g fill="#c8c8c8"><circle cx="1281.5" cy="420.7" r="1.5"/><circle cx="1286" cy="420.7" r="1.5"/><circle cx="1290.5" cy="420.7" r="1.5"/></g>
<!-- convert icons in panel -->
<g fill="#c8c8c8" stroke="#c8c8c8">
<rect x="1157" y="451" width="4.5" height="4.5" stroke="none"/>
<path d="M1159.3,455 V465" stroke-width="1.1" fill="none"/>
<path d="M1161,455.5 L1167.8,462" stroke-width="1.1" fill="none"/>
<rect x="1186.5" y="453" width="4.5" height="4.5" stroke="none"/>
<path d="M1183.5,465 Q1184,457 1188.5,455 Q1192,452 1197,451.5" stroke-width="1.1" fill="none"/>
</g>
<!-- anchor point icons in panel -->
<rect x="1156.0" y="487.0" width="5.9" height="1.8" fill="#c8c8c8"/><path d="M1155.9,502.2 L1157.2,494.8 L1163.8,489.8 L1169.6,494.6 L1164.6,498.6 Z" fill="#c8c8c8"/><path d="M1165.2,488.6 L1168.3,485.6 L1172.6,489.9 L1169.5,493.0 Z" fill="#c8c8c8"/><path d="M1156.6,501.5 L1161.5,496.5" stroke="#535353" stroke-width="0.8"/>
<g fill="#6e6e6e"><rect x="1185" y="499" width="3.5" height="3.5"/><rect x="1195" y="488.5" width="4" height="4"/><rect x="1186" y="496" width="1.5" height="1.5"/><rect x="1188" y="493" width="1.5" height="1.5"/><rect x="1191" y="491" width="1.5" height="1.5"/></g>
<rect x="1213" y="498" width="4" height="4" fill="#c8c8c8"/>
<rect x="1223" y="488" width="4" height="4" fill="#c8c8c8"/>
<path d="M1215,498 Q1216,491.5 1223.5,490.3" stroke="#c8c8c8" stroke-width="1.2" fill="none"/>
<path d="M1218,496 L1227,501 M1218,501 L1227,496" stroke="#c8c8c8" stroke-width="1.1"/>
<circle cx="1226" cy="495" r="1.2" fill="none" stroke="#c8c8c8"/><circle cx="1226" cy="502" r="1.2" fill="none" stroke="#c8c8c8"/>
<!-- right border -->
<rect x="1365" y="77" width="1" height="651" fill="#3b3b3b"/>
<!-- color catalog panel header -->
<path d="M1061.5,711 L1064,708 L1066.5,711 M1061.5,714.5 L1064,717.5 L1066.5,714.5" stroke="#d0d0d0" stroke-width="1.1" fill="none"/>
<g fill="#c8c8c8"><rect x="1349" y="708.5" width="10" height="1.3"/><rect x="1349" y="712" width="10" height="1.3"/><rect x="1349" y="715.5" width="10" height="1.3"/></g>
<!-- status bar -->
<rect x="77" y="712" width="51" height="16" fill="#454545"/>
<rect x="128" y="712" width="18" height="16" fill="#4d4d4d"/>
<path d="M133,718.5 L137,722.5 L141,718.5" stroke="#d8d8d8" stroke-width="1.4" fill="none"/>
<rect x="146" y="712" width="42" height="16" fill="#4f4f4f"/>
<path d="M155,716 V725 M163.5,716 L157.5,720.5 L163.5,725 Z" stroke="#6c6c6c" fill="#6c6c6c" stroke-width="1.2"/>
<path d="M178.5,716 L172.5,720.5 L178.5,725 Z" fill="#6c6c6c"/>
<rect x="188" y="712" width="40" height="16" fill="#454545"/>
<rect x="228" y="712" width="18" height="16" fill="#4d4d4d"/>
<path d="M233,718.5 L237,722.5 L241,718.5" stroke="#d8d8d8" stroke-width="1.4" fill="none"/>
<rect x="246" y="712" width="41" height="16" fill="#4f4f4f"/>
<path d="M256,716 L262,720.5 L256,725 Z" fill="#6c6c6c"/>
<path d="M271,716 L277,720.5 L271,725 Z M279,716 V725" fill="#6c6c6c" stroke="#6c6c6c" stroke-width="1.2"/>
<rect x="287" y="712" width="1" height="16" fill="#474747"/>
<rect x="488" y="712" width="1" height="16" fill="#474747"/>
<rect x="489" y="712" width="17" height="16" fill="#4a4a4a"/>
<path d="M495,716.5 L501,720.5 L495,724.5 Z" fill="#d0d0d0"/>
<path d="M517,716.5 L513.5,720 L517,723.5" stroke="#b0b0b0" stroke-width="1.2" fill="none"/>
<path d="M987.5,716.5 L991,720 L987.5,723.5" stroke="#b0b0b0" stroke-width="1.2" fill="none"/>
<rect x="739" y="712.5" width="25" height="15" rx="7.5" fill="#5d5d5d"/>
<rect x="998" y="711" width="17" height="17" fill="#4a4a4a"/>
</svg>

<svg style="left:0;top:0" width="1366" height="768">
<defs>
<linearGradient id="thm" x1="0" x2="0" y1="0" y2="1"><stop offset="0" stop-color="#ff7a1a"/><stop offset="0.5" stop-color="#f4f4f4"/><stop offset="1" stop-color="#5f86ff"/></linearGradient>
</defs>
<!-- active Ai tile -->
<rect x="441" y="728" width="48" height="40" fill="#3b4049"/>
<rect x="200" y="765.8" width="40" height="2.2" fill="#76b9ed"/>
<rect x="249" y="765.8" width="40" height="2.2" fill="#76b9ed"/>
<rect x="441" y="765.8" width="48" height="2.2" fill="#76b9ed"/>
<!-- windows logo -->
<path d="M15.9,741.8 L22,740.9 V746.6 H15.9 Z M22.8,740.8 L32.3,739.5 V746.6 H22.8 Z M15.9,747.6 H22 V753.4 L15.9,752.5 Z M22.8,747.6 H32.3 V756.2 L22.8,754.8 Z" fill="#fff"/>
<!-- search -->
<circle cx="74.5" cy="745.6" r="5.3" fill="none" stroke="#fff" stroke-width="1.2"/>
<path d="M70.7,749.5 L64,756" stroke="#fff" stroke-width="1.3"/>
<!-- task view -->
<path d="M112.2,740 V741.5 H122.2 V740 M112.2,755 V753.5 H122.2 V755" fill="none" stroke="#fff" stroke-width="1"/>
<rect x="112.5" y="744" width="9.5" height="7.5" fill="none" stroke="#fff" stroke-width="1.1"/>
<rect x="126.5" y="740" width="1.2" height="2.5" fill="#fff"/><rect x="125.8" y="743.5" width="2.5" height="2.5" fill="#fff"/><rect x="126.5" y="747" width="1.2" height="8" fill="#fff"/>
<!-- edge -->
<path d="M162,749 Q161.8,737.6 172.3,737.3 Q181.5,737.3 181.5,748 V750.2 H168.6 Q169.2,754.6 174.5,754.8 Q178.5,754.8 181,753.2 V757.3 Q177.5,758.8 173,758.7 Q162.3,758.3 162,749 Z" fill="#0a78d7"/>
<path d="M168.4,746.2 Q168.8,741.8 172.8,741.7 Q176.6,741.8 176.9,746.2 Z" fill="#0c1622"/>
<path d="M160.8,745.8 Q163,741.5 168,740.8 Q164,743 163,746.5 Z" fill="#0a78d7"/>
<!-- explorer -->
<path d="M209,740 H214.5 L216,741 H230.5 V756.5 H209 Z" fill="#f6d36c"/>
<rect x="209" y="742.5" width="21.5" height="14" fill="#ffe59a"/>
<rect x="210" y="739" width="6.5" height="2" fill="#fff3c8"/>
<path d="M213.5,757 V749 H226 V757 H222.5 V752 H217 V757 Z" fill="#3aaee6"/>
<!-- chrome -->
<circle cx="268.9" cy="747.9" r="11.2" fill="#1da462"/>
<path d="M268.9,747.9 L259.2,742.3 A11.2,11.2 0 0 1 278.6,742.3 Z" fill="#dd4a3a"/>
<path d="M268.9,747.9 L278.6,742.3 A11.2,11.2 0 0 1 268.9,759.1 Z" fill="#fcc934"/>
<path d="M268.9,736.7 A11.2,11.2 0 0 1 278.6,742.3 L268.9,742.3 Z" fill="#dd4a3a"/>
<circle cx="268.9" cy="747.9" r="5.3" fill="#fff"/>
<circle cx="268.9" cy="747.9" r="4.2" fill="#4c8bf5"/>
<!-- thermometer app -->
<rect x="308.7" y="739.2" width="18.5" height="16" rx="2" fill="url(#thm)"/>
<path d="M319.5,737.2 L322.8,737.8 L316.5,757.7 L313,757 Z" fill="#cfe6c0" stroke="#5a8a4a" stroke-width="0.8"/>
<path d="M320.5,739.5 L316.3,754" stroke="#e02020" stroke-width="1.5"/>
<circle cx="315.8" cy="755" r="2" fill="#e02020"/>
<!-- Ps -->
<rect x="356.9" y="737.7" width="19.5" height="18.5" fill="#061e2e" stroke="#31c5f4" stroke-width="2"/>
<text x="360.3" y="751.8" font-family="Liberation Sans" font-size="12" fill="#31c5f4" textLength="12.5" lengthAdjust="spacingAndGlyphs">Ps</text>
<!-- SW -->
<path d="M404,740 L415,736.1 L427.1,739.5 V752 L416,755.1 L404,751.5 Z" fill="#d42020"/>
<path d="M404,740 L415,736.1 L427.1,739.5 L416,743 Z" fill="#f04040"/>
<text x="405.5" y="751.5" font-family="Liberation Sans" font-weight="bold" font-size="10" fill="#f4d8d8" textLength="19" lengthAdjust="spacingAndGlyphs">SW</text>
<text x="410.5" y="758.4" font-family="Liberation Sans" font-weight="bold" font-size="7" fill="#ffffff" textLength="16.5" lengthAdjust="spacingAndGlyphs">2017</text>
<!-- Ai -->
<rect x="455.1" y="737.9" width="19.2" height="18" fill="#261300" stroke="#ff7c00" stroke-width="2"/>
<text x="458.3" y="751.5" font-family="Liberation Sans" font-size="12" fill="#ff8a00" textLength="12" lengthAdjust="spacingAndGlyphs">Ai</text>
<!-- K -->
<rect x="502.5" y="736.3" width="23" height="23" fill="#353535" stroke="#1fa9e8" stroke-width="1.2"/>
<circle cx="514" cy="747.8" r="8.6" fill="none" stroke="#1fa9e8" stroke-width="1.4"/>
<path d="M510.5,741.5 V748.5 L516,742 M511,747 L518.5,754.5" fill="none" stroke="#1fa9e8" stroke-width="2"/>
<!-- gimp -->
<path d="M556,745 Q562,739.5 573,740.5 Q571.5,746 571,749 Q569,755 562,754.5 Q558,753 556,748 Z" fill="#8a8578"/>
<circle cx="553.8" cy="747" r="2.3" fill="#e8e8e8"/><circle cx="553.5" cy="747" r="1.3" fill="#222"/>
<circle cx="560" cy="745" r="1.8" fill="#ddd"/><circle cx="564" cy="745.5" r="1.8" fill="#ddd"/>
<path d="M564,751 L572,755" stroke="#c08040" stroke-width="1.3"/>
<!-- tray -->
<g stroke="#fff" fill="none" stroke-width="1.1">
<circle cx="926.5" cy="742.8" r="2.6"/><path d="M921.5,750.5 Q922,746.5 926.5,746.3 Q930.5,746.5 930.8,750"/>
<circle cx="920" cy="746.8" r="2.6"/><path d="M915.5,755 Q915.8,750.5 920,750.3 Q924.5,750.5 924.8,755"/>
</g>
<path d="M951,754.8 L955,744.5 L962.5,739.5 L967,741 L964,748 L956.5,752 Z" fill="#b8b8b8"/>
<path d="M951.5,754.5 L960,744" stroke="#777" stroke-width="1"/>
<rect x="977.1" y="740" width="12.2" height="16.4" rx="6" fill="#1e88e5"/>
<path d="M980,744.5 L986,750.5 L983,753.5 V742.5 L986,745.5 L980,751" fill="none" stroke="#fff" stroke-width="1.1"/>
<path d="M1047.5,752 Q1046.5,747.5 1051,747.3 Q1053,742.5 1057.5,744 Q1060,744.5 1060.5,747.5 Q1063.3,748 1062.8,752 Z" fill="#fff"/>
<path d="M1071.5,741.8 L1078.5,740 L1085.5,741.8 V747 Q1085,753 1078.5,755.7 Q1072,753 1071.5,747 Z" fill="#fff"/>
<path d="M1078.5,740 V755.7 M1071.5,747.5 H1085.5" stroke="#111" stroke-width="1.2"/>
<path d="M1078.5,740 L1085.5,741.8 V747.5 H1078.5 Z" fill="#111"/>
<path d="M1071.5,747.5 H1078.5 V755.7 Q1072,753 1071.5,747.5 Z" fill="#111"/>
<circle cx="1082.5" cy="752" r="4.3" fill="#1e9e48"/>
<path d="M1080.3,752 L1082,753.6 L1084.8,750.6" stroke="#fff" stroke-width="1.1" fill="none"/>
<g stroke="#fff" stroke-width="1.1" fill="none">
<path d="M1095.3,742.5 V745.5 M1098.7,742.5 V745.5 M1094.5,745.5 H1099.5 V747.5 Q1099.5,749.5 1097,749.5 Q1094.5,749.5 1094.5,747.5 Z M1097,749.5 V752.5"/>
<rect x="1100.5" y="744.5" width="8.5" height="7.5" stroke="#aaa"/>
<path d="M1110,746.5 V750" stroke="#aaa"/>
</g>
<g stroke="#fff" stroke-width="1.2" fill="none">
<path d="M1123,753.5 Q1123.5,745 1133.5,743.5" stroke="#888"/>
<path d="M1126,754 Q1126.5,748 1133,747"/>
<path d="M1129,754.5 Q1129.3,751 1133,750.5"/>
</g>
<circle cx="1133" cy="754.5" r="1.1" fill="#fff"/>
<path d="M1144,749 L1150,743 L1156,741.5 L1157.5,747 L1152,752.5 L1146,753 Z" fill="#c03030"/>
<circle cx="1150" cy="748" r="3" fill="#e84848"/>
<circle cx="1156" cy="750" r="1.5" fill="#ddd"/><circle cx="1145" cy="751" r="1.5" fill="#ddd"/>
<g stroke="#fff" stroke-width="1.1" fill="none">
<path d="M1167.5,745.5 H1170.5 L1174,742 V754.5 L1170.5,751 H1167.5 Z"/>
<path d="M1176.5,745.5 Q1178,748.2 1176.5,751"/>
<path d="M1179,743.5 Q1182,748.2 1179,753"/>
<path d="M1181.5,741.5 Q1185.5,748.2 1181.5,755"/>
</g>
<rect x="1191.5" y="741.5" width="14.5" height="11" fill="#1a3f70" stroke="#ccc" stroke-width="0.8"/>
<path d="M1193,751 L1197,746 L1200,748 L1204,743" stroke="#7ac0ff" stroke-width="1.5" fill="none"/>
<rect x="1196" y="753.5" width="6" height="1.5" fill="#aaa"/>
<!-- notification -->
<path d="M1324.5,740 H1340.5 V752 H1331 L1327,755.5 V752 H1324.5 Z" fill="#fff"/>
<g stroke="#111" stroke-width="1"><path d="M1327,743.5 H1338 M1327,746.5 H1338 M1327,749.5 H1334"/></g>
<circle cx="1341" cy="755.5" r="8.8" fill="#2e2e2e" stroke="#8a8a8a" stroke-width="1"/>
<text x="1334.5" y="760.5" font-family="Liberation Sans" font-weight="bold" font-size="12" fill="#fff" textLength="13" lengthAdjust="spacingAndGlyphs">14</text>
<rect x="1361" y="728" width="1" height="40" fill="#3a4250"/>
</svg>

<span class="t" style="left:90.0px;top:8.24px;font-size:12px;color:#dedede;transform:scaleX(0.9491)">Файл</span>
<span class="t" style="left:132.2px;top:8.24px;font-size:12px;color:#dedede;transform:scaleX(0.9824)">Редактирование</span>
<span class="t" style="left:237.0px;top:8.24px;font-size:12px;color:#dedede;transform:scaleX(0.9740)">Объект</span>
<span class="t" style="left:292.7px;top:8.24px;font-size:12px;color:#dedede;transform:scaleX(0.9334)">Текст</span>
<span class="t" style="left:336.7px;top:8.24px;font-size:12px;color:#dedede;transform:scaleX(0.9436)">Выделение</span>
<span class="t" style="left:411.8px;top:8.24px;font-size:12px;color:#dedede;transform:scaleX(0.8710)">Эффект</span>
<span class="t" style="left:467.7px;top:8.24px;font-size:12px;color:#dedede;transform:scaleX(1.0000)">Просмотр</span>
<span class="t" style="left:537.0px;top:8.24px;font-size:12px;color:#dedede;transform:scaleX(1.0400)">Окно</span>
<span class="t" style="left:580.0px;top:8.24px;font-size:12px;color:#dedede;transform:scaleX(0.9517)">Справка</span>
<span class="t" style="left:942.0px;top:8.24px;font-size:12px;color:#dedede;transform:scaleX(1.0037)">Основные настройки</span>
<span class="t" style="left:1126.0px;top:9.24px;font-size:12px;color:#8d8d8d;transform:scaleX(0.8973)">Поиск в Adobe Stock</span>
<span class="t" style="left:15.0px;top:43.01px;font-size:10.5px;color:#d2d2d2;transform:scaleX(0.9473)">Опорная точка</span>
<span class="t" style="left:93.8px;top:43.01px;font-size:10.5px;color:#d2d2d2;transform:scaleX(0.9323)">Преобразовать:</span>
<span class="t" style="left:239.0px;top:43.01px;font-size:10.5px;color:#d2d2d2;transform:scaleX(0.9325)">Маркеры:</span>
<span class="t" style="left:347.4px;top:43.01px;font-size:10.5px;color:#d2d2d2;transform:scaleX(0.9677)">Опорные точки:</span>
<span class="t" style="left:605.6px;top:43.01px;font-size:10.5px;color:#e8e8e8;transform:scaleX(0.8952);font-weight:bold">X:</span>
<span class="t" style="left:642.8px;top:43.01px;font-size:10.5px;color:#f0f0f0;transform:scaleX(0.9334)">954,5 px</span>
<span class="t" style="left:704.8px;top:43.01px;font-size:10.5px;color:#e8e8e8;transform:scaleX(0.8847);font-weight:bold">Y:</span>
<span class="t" style="left:741.0px;top:43.01px;font-size:10.5px;color:#f0f0f0;transform:scaleX(0.9150)">1091,5 px</span>
<span class="t" style="left:803.0px;top:43.01px;font-size:10.5px;color:#e8e8e8;transform:scaleX(0.8542);font-weight:bold">Ш:</span>
<span class="t" style="left:842.6px;top:43.01px;font-size:10.5px;color:#6a6a6a;transform:scaleX(0.9674)">0 px</span>
<span class="t" style="left:933.4px;top:43.01px;font-size:10.5px;color:#e8e8e8;transform:scaleX(0.8665);font-weight:bold">В:</span>
<span class="t" style="left:971.0px;top:43.01px;font-size:10.5px;color:#6a6a6a;transform:scaleX(0.9775)">0 px</span>
<span class="t" style="left:83.2px;top:74.67px;font-size:11.5px;color:#e6e6e6;transform:scaleX(0.9671);font-weight:bold">hand.ai* @ 50% (RGB/Просмотр)</span>
<span class="t" style="left:81.3px;top:716.51px;font-size:10.5px;color:#e6e6e6;transform:scaleX(0.9184)">50%</span>
<span class="t" style="left:191.8px;top:716.51px;font-size:10.5px;color:#e6e6e6;transform:scaleX(0.8562)">1</span>
<span class="t" style="left:377.0px;top:716.51px;font-size:10.5px;color:#cfcfcf;transform:scaleX(0.8897)">Перо</span>
<span class="t" style="left:1066.2px;top:85.51px;font-size:10.5px;color:#f2f2f2;transform:scaleX(0.8977);font-weight:bold">Свойства</span>
<span class="t" style="left:1129.8px;top:85.51px;font-size:10.5px;color:#c8c8c8;transform:scaleX(0.9596)">Слои</span>
<div class="a" style="left:1158px;top:80px;width:58px;height:22px;overflow:hidden"><span class="t" style="left:8.0px;top:5.51px;font-size:10.5px;color:#c8c8c8;transform:scaleX(0.9274)">Трансформирование</span></div>
<div class="a" style="left:1217px;top:80px;width:57px;height:22px;overflow:hidden"><span class="t" style="left:7.8px;top:5.51px;font-size:10.5px;color:#c8c8c8;transform:scaleX(1.0386)">Обработка</span></div>
<span class="t" style="left:1284.0px;top:85.51px;font-size:10.5px;color:#c8c8c8;transform:scaleX(0.9946)">Цвет</span>
<span class="t" style="left:1067.0px;top:116.51px;font-size:10.5px;color:#d2d2d2;transform:scaleX(0.9459)">Опорная точка</span>
<span class="t" style="left:1067.0px;top:148.01px;font-size:10.5px;color:#d2d2d2;transform:scaleX(0.9303)">Трансформирование</span>
<span class="t" style="left:1101.0px;top:174.01px;font-size:10.5px;color:#d2d2d2;transform:scaleX(0.9072)">X:</span>
<span class="t" style="left:1118.8px;top:174.01px;font-size:10.5px;color:#f0f0f0;transform:scaleX(0.9235)">954,5 px</span>
<span class="t" style="left:1101.0px;top:200.01px;font-size:10.5px;color:#d2d2d2;transform:scaleX(0.9635)">Y:</span>
<span class="t" style="left:1118.8px;top:200.01px;font-size:10.5px;color:#f0f0f0;transform:scaleX(0.9193)">1091,5 px</span>
<span class="t" style="left:1184.6px;top:174.01px;font-size:10.5px;color:#d2d2d2;transform:scaleX(0.9888)">Ш:</span>
<span class="t" style="left:1206.0px;top:174.01px;font-size:10.5px;color:#6a6a6a;transform:scaleX(0.9725)">0 px</span>
<span class="t" style="left:1188.0px;top:200.01px;font-size:10.5px;color:#d2d2d2;transform:scaleX(0.9072)">В:</span>
<span class="t" style="left:1206.0px;top:200.01px;font-size:10.5px;color:#6a6a6a;transform:scaleX(0.9725)">0 px</span>
<span class="t" style="left:1114.0px;top:225.51px;font-size:10.5px;color:#6a6a6a;transform:scaleX(1.1954)">0°</span>
<span class="t" style="left:1066.7px;top:278.01px;font-size:10.5px;color:#d2d2d2;transform:scaleX(0.9099)">Оформление</span>
<span class="t" style="left:1096.9px;top:305.51px;font-size:10.5px;color:#c8c8c8;transform:scaleX(0.9180)">Заливка</span>
<span class="t" style="left:1097.0px;top:334.01px;font-size:10.5px;color:#f0f0f0;transform:scaleX(0.8666);font-weight:bold">Обводка</span>
<span class="t" style="left:1202.7px;top:334.01px;font-size:10.5px;color:#f0f0f0;transform:scaleX(0.9878)">5 pt</span>
<span class="t" style="left:1097.0px;top:363.01px;font-size:10.5px;color:#f0f0f0;transform:scaleX(0.8716);font-weight:bold">Непрозрачность</span>
<span class="t" style="left:1185.2px;top:363.01px;font-size:10.5px;color:#f0f0f0;transform:scaleX(0.9235)">100%</span>
<span class="t" style="left:1066.7px;top:452.51px;font-size:10.5px;color:#d2d2d2;transform:scaleX(0.9388)">Преобразовать:</span>
<span class="t" style="left:1066.7px;top:488.51px;font-size:10.5px;color:#d2d2d2;transform:scaleX(0.9677)">Опорные точки:</span>
<span class="t" style="left:1066.7px;top:528.01px;font-size:10.5px;color:#d2d2d2;transform:scaleX(0.9284)">Быстрые действия</span>
<span class="t" style="left:1072.0px;top:707.51px;font-size:10.5px;color:#f0f0f0;transform:scaleX(0.9432);font-weight:bold">Каталог цветов</span>
<span class="t" style="left:1218.0px;top:743.14px;font-size:12px;color:#ffffff;transform:scaleX(0.8947)">РУС</span>
<span class="t" style="left:1265.7px;top:733.64px;font-size:12px;color:#ffffff;transform:scaleX(0.9091)">22:04</span>
<span class="t" style="left:1253.0px;top:751.64px;font-size:12px;color:#ffffff;transform:scaleX(0.8991)">17.02.2019</span>
<span class="t" style="left:1000.6px;top:744.01px;font-size:10.5px;color:#ffd800;transform:scaleX(1.0275)">50</span>
<span class="t" style="left:1024.5px;top:744.01px;font-size:10.5px;color:#44e07a;transform:scaleX(1.0275)">50</span>
<span class="t" style="left:1007.3px;top:635.26px;font-size:18px;color:rgba(215,215,215,0.47);transform:scaleX(1.1032)">Активация Windows</span>
<span class="t" style="left:1007.3px;top:658.95px;font-size:14px;color:rgba(215,215,215,0.47);transform:scaleX(1.0699)">Чтобы активировать Windows, перейдите в</span>
<span class="t" style="left:1007.3px;top:679.95px;font-size:14px;color:rgba(215,215,215,0.47);transform:scaleX(1.0732)">раздел &quot;Параметры&quot;.</span>
</body></html>
